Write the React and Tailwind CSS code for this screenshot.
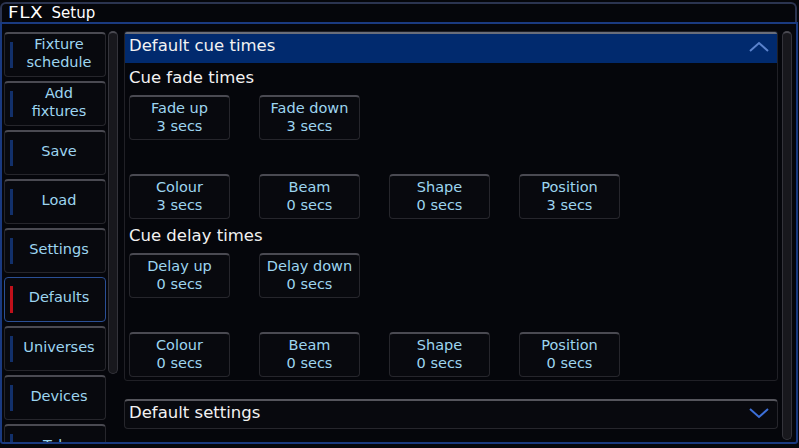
import React from 'react';

const sideItems = [
  ['Fixture', 'schedule'],
  ['Add', 'fixtures'],
  ['Save'],
  ['Load'],
  ['Settings'],
  ['Defaults'],
  ['Universes'],
  ['Devices'],
  ['Tabs'],
];

const fadeRow = [['Fade up', '3 secs'], ['Fade down', '3 secs']];
const fadeAttr = [['Colour', '3 secs'], ['Beam', '0 secs'], ['Shape', '0 secs'], ['Position', '3 secs']];
const delayRow = [['Delay up', '0 secs'], ['Delay down', '0 secs']];
const delayAttr = [['Colour', '0 secs'], ['Beam', '0 secs'], ['Shape', '0 secs'], ['Position', '0 secs']];

const SideButton = ({ lines, active }) => (
  <div
    className={
      'h-[45px] shrink-0 flex items-stretch pl-[5px] py-[8px] rounded-[4px] bg-[#08090e] ' +
      (active
        ? 'border border-[#2a4f95]'
        : 'border border-[#26262c] border-t-2 border-t-[#4a4a52]')
    }
  >
    <div className={'w-[3px] ' + (active ? 'bg-[#c0101a]' : 'bg-[#12306a]')}></div>
    <div className="flex-1 flex flex-col items-center justify-center pb-[5px] text-[14.5px] leading-[18px] text-[#9dd5f0]">
      {lines.map((l) => (
        <span key={l}>{l}</span>
      ))}
    </div>
  </div>
);

const TimeButton = ({ label, value }) => (
  <div className="w-[101px] h-[45px] shrink-0 flex flex-col items-center justify-center pb-[3px] rounded-[4px] bg-[#08090e] border border-[#26262c] border-t-2 border-t-[#4a4a52] text-[14.5px] leading-[18px] text-[#9dd5f0]">
    <span>{label}</span>
    <span>{value}</span>
  </div>
);

const Row = ({ items }) => (
  <div className="flex gap-[29px] pl-[4px]">
    {items.map(([l, v]) => (
      <TimeButton key={l} label={l} value={v} />
    ))}
  </div>
);

const ScrollBar = ({ h }) => (
  <div className={'w-[10px] rounded-full bg-[#18181d] border border-[#34343b] border-t-2 border-t-[#4a4a52] ' + h}></div>
);

export default function App() {
  return (
    <div
      className="w-[799px] h-[448px] bg-[#05060b] overflow-hidden flex flex-col"
      style={{ fontFamily: '"DejaVu Sans", Verdana, sans-serif' }}
    >
      {/* title bar */}
      <div className="h-[22px] pt-[2px]">
        <div className="h-[20px] mr-[2px] border-t-2 border-x-2 border-[#2b3450] rounded-t-[6px] flex items-center pl-[6px] gap-[13px] text-white">
          <span className="inline-block text-[16px] tracking-[0.5px] leading-none scale-x-115 origin-left">FLX</span>
          <span className="text-[15px] leading-none">Setup</span>
        </div>
      </div>

      {/* body */}
      <div className="h-[422px] mr-[1px] border-2 border-[#1a3a80] rounded-b-[3px] flex pl-[2px] overflow-hidden">
        {/* sidebar */}
        <div className="w-[102px] pt-[8px] flex flex-col gap-[4px] overflow-hidden">
          {sideItems.map((lines) => (
            <SideButton key={lines.join(' ')} lines={lines} active={lines[0] === 'Defaults'} />
          ))}
        </div>
        <div className="ml-[2px] pt-[7px]">
          <ScrollBar h="h-[343px]" />
        </div>

        {/* main */}
        <div className="w-[654px] ml-[6px] pt-[7px] flex flex-col">
          <div className="h-[350px] border border-[#202026] rounded-[3px] overflow-hidden flex flex-col">
            <div className="h-[31px] shrink-0 bg-[#012a6e] border-t-2 border-[#6a6e7a] flex items-center justify-between pl-[4px] pr-[8px] pb-[4px]">
              <span className="text-[16.5px] text-[#f2f2f2]">Default cue times</span>
              <svg width="20" height="11" viewBox="0 0 20 11">
                <path d="M1 10 L10 2 L19 10" fill="none" stroke="#5a82cc" strokeWidth="2" />
              </svg>
            </div>
            <div className="h-[32px] shrink-0 pl-[4px] text-[16.5px] leading-[30px] text-[#f2f2f2]">Cue fade times</div>
            <Row items={fadeRow} />
            <div className="mt-[34px]">
              <Row items={fadeAttr} />
            </div>
            <div className="h-[34px] shrink-0 pl-[4px] text-[16.5px] leading-[34px] text-[#f2f2f2]">Cue delay times</div>
            <Row items={delayRow} />
            <div className="mt-[34px]">
              <Row items={delayAttr} />
            </div>
          </div>

          <div className="mt-[18px] h-[30px] bg-[#08090e] border border-[#26262c] border-t-2 border-t-[#55555c] rounded-[4px] flex items-center justify-between pl-[4px] pr-[8px] pb-[2px]">
            <span className="text-[16.5px] text-[#f2f2f2]">Default settings</span>
            <svg width="20" height="11" viewBox="0 0 20 11">
              <path d="M1 1 L10 9 L19 1" fill="none" stroke="#3c6fd8" strokeWidth="2" />
            </svg>
          </div>
        </div>

        <div className="ml-[4px] pt-[7px]">
          <ScrollBar h="h-[409px]" />
        </div>
      </div>
    </div>
  );
}
